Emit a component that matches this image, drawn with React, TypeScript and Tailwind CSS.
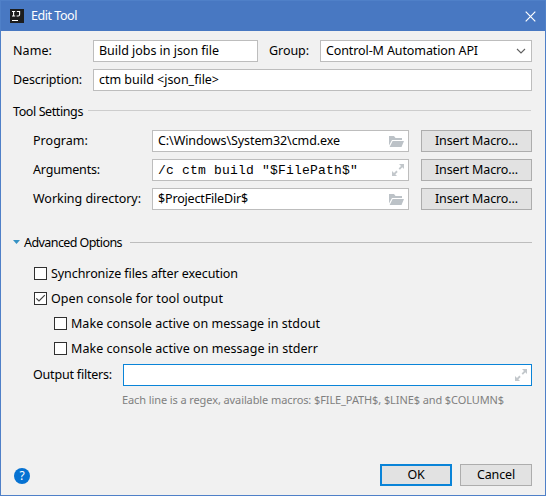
import { useLayoutEffect, useRef, type ReactNode } from "react";

/** Single-line text whose letter spacing is tuned so that it spans `width` pixels. */
function Label({ text, width, className = "" }: { text: string; width: number; className?: string }) {
  const ref = useRef<HTMLSpanElement>(null);
  useLayoutEffect(() => {
    const el = ref.current;
    if (!el) return;
    el.style.letterSpacing = "0px";
    const natural = el.getBoundingClientRect().width;
    el.style.letterSpacing = `${(width - natural) / text.length}px`;
  }, [text, width]);
  return (
    <span ref={ref} className={`inline-block shrink-0 whitespace-pre ${className}`}>
      {text}
    </span>
  );
}

function Field({
  className = "",
  focused = false,
  children,
}: {
  className?: string;
  focused?: boolean;
  children?: ReactNode;
}) {
  return (
    <div
      className={`flex h-[22px] items-center border bg-white pl-[5px] ${
        focused ? "border-[#0a84d8]" : "border-[#bdbdbd]"
      } ${className}`}
    >
      {children}
    </div>
  );
}

function Folder() {
  return (
    <svg className="mr-1 ml-auto h-[11px] w-[15px]" viewBox="0 0 15 11" fill="#bcc2c7">
      <path d="M0 0h5l1.500 2H13v2H3L0 9.500Z" />
      <path d="M3.600 5H15l-2.500 6H.600Z" />
    </svg>
  );
}

function Expand() {
  return (
    <svg className="mr-1 ml-auto h-3 w-3" viewBox="0 0 12 12" fill="#c2c7cb">
      <path d="M7 0h5v5l-1.700-1.700-2.400 2.400-1.300-1.300L9 2Z" />
      <path d="M0 7v5h5l-1.700-1.700 2.400-2.400-1.300-1.300L2 9Z" />
    </svg>
  );
}

function Button({ text, width, className }: { text: string; width: number; className: string }) {
  return (
    <button className={`flex h-[22px] items-center justify-center bg-[#e2e2e2] pb-px ${className}`}>
      <Label text={text} width={width} />
    </button>
  );
}

function Check({ text, width, checked = false }: { text: string; width: number; checked?: boolean }) {
  return (
    <label className="flex h-[25px] items-center">
      <span className="h-[13px] w-[13px] border border-[#303030] bg-white">
        {checked && (
          <svg className="h-[11px] w-[11px]" viewBox="0 0 11 11" fill="none" stroke="#424242" strokeWidth="1.2">
            <path d="M1.300 5.300 4 8l5.800-5.800" />
          </svg>
        )}
      </span>
      <Label text={text} width={width} className="ml-1" />
    </label>
  );
}

function ToolRow({ name, nameWidth, children }: { name: string; nameWidth: number; children: ReactNode }) {
  return (
    <div className="flex h-[22px] items-center">
      <div className="flex w-[119px]">
        <Label text={name} width={nameWidth} />
      </div>
      <Field className="mr-3 w-[257px]">{children}</Field>
      <Button text="Insert Macro..." width={83} className="w-[111px] border border-[#adadad]" />
    </div>
  );
}

export default function App() {
  return (
    <div className="flex h-[496px] w-[546px] flex-col overflow-hidden border border-[#4f80c8] bg-[#f1f1f1] font-['Noto_Sans','Open_Sans',sans-serif] text-[12.5px] leading-[18px] text-black">
      <header className="flex h-[30px] shrink-0 items-center bg-[#4878c2] pr-[9px] pl-[9px] text-white">
        <svg className="h-3.5 w-3.5" viewBox="0 0 14 14">
          <path fill="#1c1c1c" d="M0 0h14v14H0z" />
          <path
            fill="none"
            stroke="#fff"
            strokeWidth="1.100"
            d="M2 2.500h3.200M3.600 2.500v4.500M2 7h3.200M6.800 2.500h2.800v3Q9.600 7 8.200 7H6.600"
          />
          <path fill="#fff" d="M2 11h6v1H2z" />
        </svg>
        <Label text="Edit Tool" width={46} className="ml-[7px]" />
        <svg className="ml-auto h-[11px] w-[11px]" viewBox="0 0 11 11" stroke="#fff" strokeWidth="1.200">
          <path d="m.7.700 9.600 9.600M10.300.700.700 10.300" />
        </svg>
      </header>

      <main className="flex flex-col pt-[9px] pr-[13px] pl-3">
        <div className="flex h-[22px] items-center">
          <div className="flex w-20">
            <Label text="Name:" width={39} />
          </div>
          <Field className="w-[165px]">
            <Label text="Build jobs in json file" width={120} />
          </Field>
          <div className="flex w-[62px] pl-[11px]">
            <Label text="Group:" width={40} />
          </div>
          <Field className="w-[212px] pr-1">
            <Label text="Control-M Automation API" width={152} />
            <svg className="mr-px mb-px ml-auto h-2 w-2.5" viewBox="0 0 10 8" fill="none" stroke="#606060" strokeWidth="1.100">
              <path d="m1 2 4 4 4-4" />
            </svg>
          </Field>
        </div>
        <div className="mt-[7px] flex h-[22px] items-center">
          <div className="flex w-20">
            <Label text="Description:" width={69} />
          </div>
          <Field className="w-[439px]">
            <Label text="ctm build <json_file>" width={120} />
          </Field>
        </div>

        <div className="mt-3 flex h-[18px] items-center">
          <Label text="Tool Settings" width={70} />
          <div className="mb-[3px] ml-[5px] h-px w-[443px] bg-[#cdcdcd]" />
        </div>
        <section className="mt-[9px] flex flex-col gap-[7px] pl-5">
          <ToolRow name="Program:" nameWidth={55}>
            <Label text="C:\Windows\System32\cmd.exe" width={182} />
            <Folder />
          </ToolRow>
          <ToolRow name="Arguments:" nameWidth={67}>
            <Label
              text={'/c ctm build "$FilePath$"'}
              width={200}
              className="mt-0.5 font-['Liberation_Mono',monospace] text-[13px]"
            />
            <Expand />
          </ToolRow>
          <ToolRow name="Working directory:" nameWidth={108}>
            <Label text="$ProjectFileDir$" width={90} />
            <Folder />
          </ToolRow>
        </section>

        <div className="mt-6 flex h-[18px] items-center">
          <svg className="mb-0.5 h-1 w-[7px]" viewBox="0 0 7 4" fill="#3592c4">
            <path d="M0 0h7L3.500 4Z" />
          </svg>
          <Label text="Advanced Options" width={98} className="ml-1" />
          <div className="mb-px ml-2 h-px w-[402px] bg-[#bdbdbd]" />
        </div>
        <section className="mt-[9px] flex flex-col pl-[21px]">
          <Check text="Synchronize files after execution" width={187} />
          <Check text="Open console for tool output" width={172} checked />
          <div className="flex flex-col pl-5">
            <Check text="Make console active on message in stdout" width={249} />
            <Check text="Make console active on message in stderr" width={247} />
          </div>
        </section>
        <div className="mt-[3px] flex h-[22px] items-center pl-5">
          <div className="flex w-[90px]">
            <Label text="Output filters:" width={79} />
          </div>
          <Field className="w-[409px]" focused>
            <Expand />
          </Field>
        </div>
        <div className="mt-[5px] flex pl-[109px] text-[11px] text-[#808080]">
          <Label text="Each line is a regex, available macros: $FILE_PATH$, $LINE$ and $COLUMN$" width={382} />
        </div>
      </main>

      <footer className="mt-auto mb-[9px] flex h-[22px] items-center gap-2 pr-[13px] pl-[13px]">
        <button className="mt-0.5 mr-auto flex h-4 w-4 items-center justify-center rounded-full bg-[#0672d2] text-[12px] leading-4 text-white">
          ?
        </button>
        <Button text="OK" width={17} className="w-[72px] border-2 border-[#0a84d8]" />
        <Button text="Cancel" width={38} className="w-[72px] border border-[#adadad]" />
      </footer>
    </div>
  );
}
